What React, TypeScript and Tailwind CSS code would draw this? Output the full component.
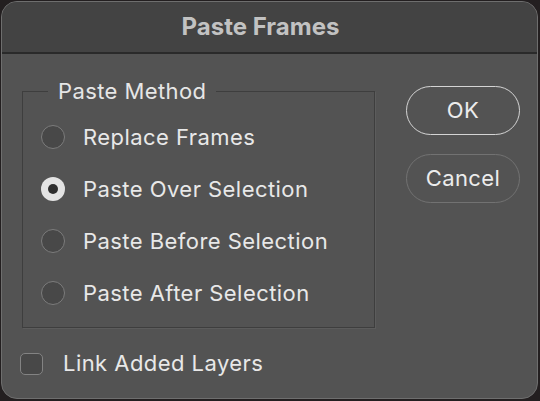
import React from "react";

const font = { fontFamily: "Inter, 'Noto Sans', 'Liberation Sans', sans-serif" };

function Radio({ checked }: { checked?: boolean }) {
  if (checked) {
    return (
      <span className="w-[24px] h-[24px] rounded-full bg-[#e3e3e3] flex items-center justify-center shrink-0">
        <span className="w-[10px] h-[10px] rounded-full bg-[#2e2e2e]" />
      </span>
    );
  }
  return <span className="w-[24px] h-[24px] rounded-full bg-[#484848] border-[1.5px] border-[#7c7c7c] shrink-0" />;
}

const options = [
  { label: "Replace Frames", checked: false },
  { label: "Paste Over Selection", checked: true },
  { label: "Paste Before Selection", checked: false },
  { label: "Paste After Selection", checked: false },
];

export default function App() {
  return (
    <div className="w-[540px] h-[401px] bg-[#231f20] overflow-hidden" style={font}>
      <div className="ml-[1px] mt-[1px] w-[537px] h-[398px] rounded-[16px] border border-[#6e6e6e] overflow-hidden flex flex-col bg-[#535353]">
        <div className="h-[52px] bg-[#434343] border-b-2 border-[#2a2a2a] flex items-center justify-center pr-[18px] shrink-0">
          <span className="text-[24px] font-bold text-[#c2c2c2]">Paste Frames</span>
        </div>
        <div className="flex-1 flex flex-col pl-[20px]">
          <div className="flex">
            <fieldset className="mt-[25px] w-[353px] h-[249px] border border-[#3e3e3e] shadow-[1px_1px_0_#5c5c5c] pl-[18px] pt-[8px]">
              <legend className="ml-[7px] px-[10px] text-[22px] leading-[24px] tracking-[0.4px] text-[#e6e6e6]">Paste Method</legend>
              {options.map((o) => (
                <div key={o.label} className="h-[52px] flex items-center gap-[18px]">
                  <Radio checked={o.checked} />
                  <span className="text-[22px] tracking-[0.45px] text-[#e8e8e8]">{o.label}</span>
                </div>
              ))}
            </fieldset>
            <div className="ml-[31px] mt-[32px] flex flex-col gap-[19px]">
              <button className="w-[114px] h-[49px] rounded-full border-[1.5px] border-[#d4d4d4] text-[22px] tracking-[0.4px] text-[#ececec]">OK</button>
              <button className="w-[114px] h-[49px] rounded-full border-[1.5px] border-[#727272] text-[22px] tracking-[0.4px] text-[#ececec]">Cancel</button>
            </div>
          </div>
          <div className="mt-[19px] flex items-center gap-[20px] -ml-[2px]">
            <span className="w-[23px] h-[22px] rounded-[5px] bg-[#484848] border-[1.5px] border-[#838383]" />
            <span className="text-[22px] tracking-[0.45px] text-[#e8e8e8]">Link Added Layers</span>
          </div>
        </div>
      </div>
    </div>
  );
}
